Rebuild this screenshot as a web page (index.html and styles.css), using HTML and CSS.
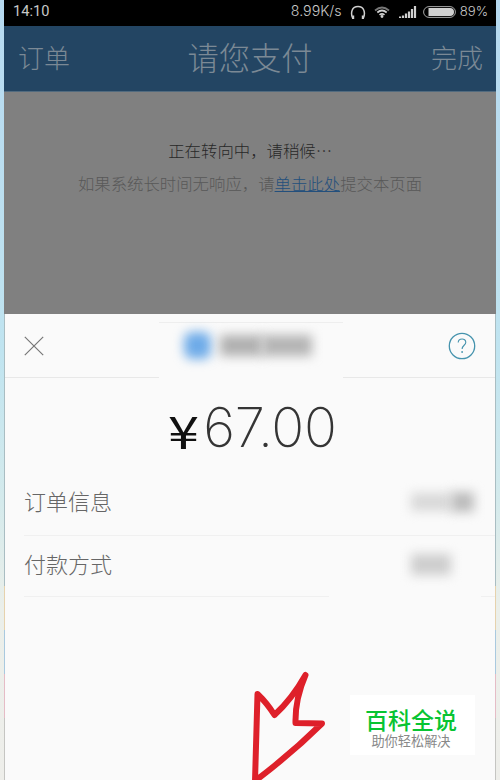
FILE: index.html
```html
<!DOCTYPE html>
<html lang="zh-CN">
<head>
<meta charset="utf-8">
<title>请您支付</title>
<link rel="stylesheet" href="styles.css">
</head>
<body>
<main class="phone">
  <header class="status">
    <span>14:10</span>
    <div class="status-right">
      <span class="speed">8.99K/s</span>
      <svg class="headphones" width="16" height="16" viewBox="0 0 16 16"><path d="M4 14.300H2.700C.2 8.500 2 2.500 8 2.500s7.800 6 5.300 11.800H12" fill="none" stroke="#d0d0d0" stroke-width="1.500"/><path d="M3.200 11.500v3.500M12.800 11.500v3.500" stroke="#d0d0d0" stroke-width="2"/></svg>
      <svg class="wifi" width="16" height="12" viewBox="0 0 16 12"><g fill="none" stroke="#d0d0d0" stroke-width="1.700"><path d="M1 4.500Q8-1.500 15 4.500" stroke="#777"/><path d="M3.300 6.500Q8 2.500 12.700 6.500M5.500 8.800Q8 6.800 10.500 8.800"/></g><circle cx="8" cy="10.500" r="1.400" fill="#d0d0d0"/></svg>
      <svg class="signal" width="18" height="12" viewBox="0 0 18 12"><path d="M1 12v-1.500M4 12V9.500M7 12V7.500M10 12V5.500M13 12V3M16 12V0" stroke="#d0d0d0" stroke-width="2.200"/></svg>
      <svg class="battery" width="33" height="12" viewBox="0 0 33 12"><rect x=".6" y=".6" width="31.800" height="10.800" rx="5.400" fill="none" stroke="#a5a5a5"/><path d="M5.500 2H27a4 4 0 0 1 0 8H5.500z" fill="#d0d0d0"/></svg>
      <span class="percent">89%</span>
    </div>
  </header>
  <nav class="navbar">
    <span class="nav-side">订单</span>
    <h1>请您支付</h1>
    <span class="nav-side">完成</span>
  </nav>
  <section class="redirect">
    <p class="waiting">正在转向中，请稍候<span class="dots">⋯</span></p>
    <p class="hint">如果系统长时间无响应，请<a>单击此处</a>提交本页面</p>
  </section>
  <section class="sheet">
    <div class="sheet-head">
      <svg width="20" height="20" viewBox="0 0 20 20"><path d="M.8.800l18.400 18.400M19.200.800.800 19.200" stroke="#777" stroke-width="1.200"/></svg>
      <div class="masked-title"><i class="smudge logo"></i><i class="smudge title-a"></i><i class="smudge title-b"></i></div>
      <svg width="28" height="28" viewBox="0 0 28 28"><g fill="none" stroke="#4593ad"><circle cx="14" cy="14" r="12.700" stroke-width="1.300"/><path d="M10.200 10.500c.2-4.700 7.600-4.700 7.600-.2 0 3-3.700 3-3.700 6.700" stroke-width="1.100"/></g><circle cx="14.100" cy="20" r=".9" fill="#4593ad"/></svg>
    </div>
    <div class="amount"><span class="yen">¥</span><span class="figure">67.00</span></div>
    <div class="row first"><span>订单信息</span><div class="mask"><i class="smudge value-a"></i><i class="smudge value-b"></i></div></div>
    <div class="row second"><span>付款方式</span><div class="mask"><i class="smudge value-c"></i></div></div>
    <svg class="arrow" width="90" height="120" viewBox="0 0 90 120"><path d="M25 121L27.500 34Q37 43 44.500 55Q62 39 75.500 15Q65 39 65.500 63L92 63.500Q61 94 25 121Z" fill="none" stroke="#de202a" stroke-width="6" stroke-linejoin="round"/></svg>
    <aside class="brand"><strong>百科全说</strong><span>助你轻松解决</span></aside>
  </section>
  <i class="edge left"></i><i class="edge right"></i>
</main>
</body>
</html>
```
FILE: styles.css
```css
* { box-sizing: border-box; }
body {
  margin: 0;
  height: 780px;
  overflow: hidden;
  padding: 0 4px;
  background: linear-gradient(#b6d9f0, #c0e4f0 45%, #d4eaec 64%, #ebefea 78%, #eeeeea);
  font-family: "Noto Sans CJK SC", sans-serif;
  font-weight: 300;
}
.phone { position: relative; height: 780px; display: flex; flex-direction: column; background: #fafafa; }
.status {
  height: 26px;
  flex: none;
  display: flex;
  justify-content: space-between;
  padding: 0 8px 3px 9px;
  background: #000;
  color: #c8c8c8;
  font: 400 14.600px/22px Roboto, sans-serif;
}
.status-right { display: flex; align-items: center; }
.speed { font: 300 14.200px/22px Inter, sans-serif; transform: translateY(-1px); }
.headphones { margin-left: 8px; }
.wifi { margin-left: 8px; }
.signal { margin-left: 9px; }
.battery { margin-left: 6px; }
.percent { margin-left: 4px; font: 300 13.200px/22px Inter, sans-serif; transform: translateY(-1px); }
.navbar {
  height: 66px;
  flex: none;
  display: flex;
  align-items: center;
  justify-content: space-between;
  padding: 0 13px 4px 14px;
  background: #234563;
  border-bottom: 1px solid #526b7f;
  color: #7b8995;
}
.navbar h1 { margin: 0 1px 0 0; font-size: 31.300px; line-height: 60px; font-weight: 300; }
.nav-side { font-size: 26px; line-height: 60px; }
.redirect { height: 222px; flex: none; background: #808080; text-align: center; padding-top: 42px; }
.redirect p { margin: 0; font-size: 16.400px; line-height: 33px; }
.waiting { color: #282828; }
.dots { display: inline-block; width: 16px; }
.hint { color: #585858; }
.hint a { color: #234f7c; text-decoration: underline; }
.sheet { position: relative; flex: 1; }
.sheet-head {
  height: 64px;
  display: flex;
  align-items: center;
  justify-content: space-between;
  padding: 0 20px;
  border-bottom: 1px solid #e8e8e8;
}
.masked-title {
  width: 184px;
  height: 58px;
  margin: 9px 0 -2px 10px;
  display: flex;
  align-items: flex-start;
  padding: 9px 0 0 25px;
  border-top: 1px solid #eee;
  background: #fafafa;
}
.smudge { display: block; filter: blur(5.500px); }
.logo { width: 27px; height: 27px; border-radius: 8px; background: #6eabe8; }
.title-a { width: 43px; height: 21px; margin: 3px 0 0 9px; background: #b0b0b0; }
.title-b { width: 50px; height: 21px; margin: 3px 0 0 -1px; background: #b4b4b4; }
.amount {
  height: 94px;
  display: flex;
  justify-content: center;
  align-items: baseline;
  padding: 17px 0 0 4px;
  line-height: 65px;
  color: #353535;
}
.yen {
  width: 36px;
  color: #111;
  font: 400 45px/65px "Noto Sans CJK SC", sans-serif;
  transform: translate(1px, 2px) scaleX(1.240);
  transform-origin: left;
}
.figure { font: 250 54.500px/65px Inter, sans-serif; letter-spacing: -.2px; }
.row {
  height: 61px;
  margin-left: 20px;
  display: flex;
  align-items: center;
  justify-content: space-between;
  border-bottom: 1px solid #f0f0f0;
  color: #666;
  font-size: 22px;
}
.row > span { transform: translateY(-3px); }
.first { height: 64px; }
.first > span { transform: translateY(-4px); }
.mask { width: 152px; height: 61px; margin-right: 15px; padding: 0 0 3px 82px; display: flex; align-items: center; background: #fafafa; }
.value-a { width: 40px; height: 18px; background: #d8d8d8; }
.value-b { width: 23px; height: 20px; background: #bbb; }
.value-c { width: 40px; height: 21px; background: #cdcdcd; }
.arrow { position: absolute; left: 226px; top: 346px; overflow: visible; }
.brand {
  position: absolute;
  left: 346px;
  top: 381px;
  width: 125px;
  height: 60px;
  padding: 12px 3px 0 0;
  display: flex;
  flex-direction: column;
  align-items: center;
  background: #fff;
}
.brand strong { color: #08c432; font-size: 23px; line-height: 25px; font-weight: 500; }
.brand span { color: #888; font-size: 13.200px; line-height: 17px; font-weight: 400; }
.edge {
  position: absolute;
  top: 314px;
  bottom: 0;
  width: 1px;
  background: linear-gradient(#a9bdc2 0 272px, #e6d2ad 272px 316px, #a9c9df 316px 360px, #e5bcc6 360px 404px, #c5c5c2 404px);
}
.left { left: 0; }
.right { right: 0; }
```
